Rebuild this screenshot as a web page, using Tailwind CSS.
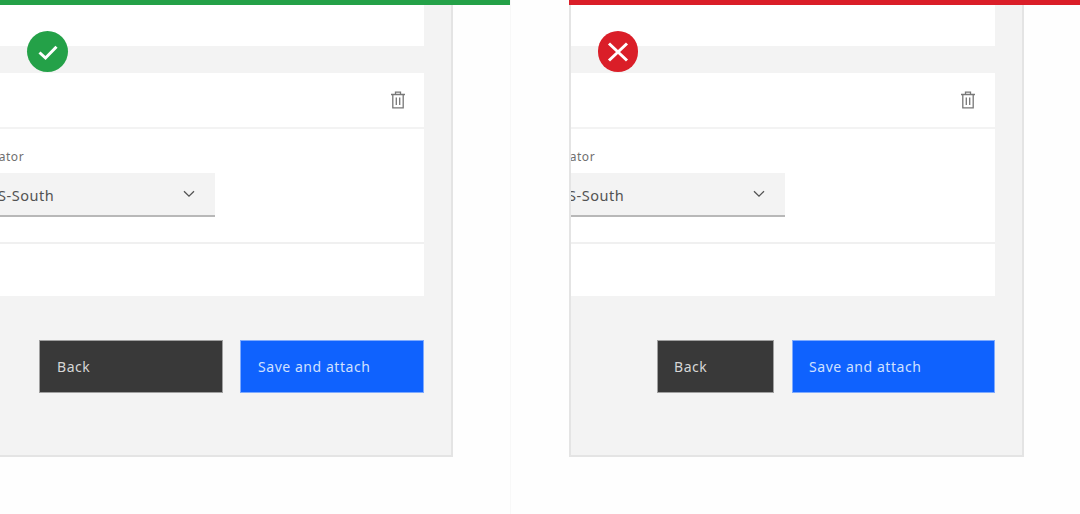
<!DOCTYPE html>
<html lang="en">

<head>
    <meta charset="UTF-8" />
    <title>Attach resource - do and don't</title>
    <script src="https://cdn.jsdelivr.net/npm/@tailwindcss/browser@4"></script>
</head>

<body class="bg-[#fefefe] font-['Noto_Sans',sans-serif] text-[#525252]">
    <div class="flex w-[1080px] h-[514px] overflow-hidden">

        <!-- Do -->
        <div class="w-[511px] shrink-0 border-r border-[#f8f8f8] overflow-hidden">
            <div class="h-[5px] bg-[#24a148]"></div>
            <div class="relative -ml-[2px] w-[455px] h-[452px] bg-[#f3f3f3] border-r-2 border-b-2 border-[#e4e4e4] pr-[27px]">
                <div class="h-[41px] bg-white"></div>
                <div class="mt-[27px] bg-white overflow-hidden">
                    <div class="h-[56px] border-b-2 border-[#f3f3f3] flex items-center justify-end pr-[18px]">
                        <svg class="w-[16px] h-[18px] text-[#777777]" viewBox="0 0 16 18" fill="none" stroke="currentColor" stroke-width="1.3">
                            <path d="M1 3.5h14M5.5 3.5V1.2h5v2.3M2.8 3.5V16.8h10.4V3.5M6.3 6.5v7.5M9.7 6.5v7.5" />
                        </svg>
                    </div>
                    <div class="h-[115px] border-b-2 border-[#f0f0f0] pt-[21px]">
                        <p class="-ml-[20px] text-[12px] leading-[14px] tracking-[0.5px] text-[#6f6f6f] whitespace-nowrap">Locator</p>
                        <div class="mt-[9px] w-[217px] h-[44px] bg-[#f3f3f3] border-b-2 border-[#b8b8b8] flex items-center justify-between pr-[20px] pt-[4px]">
                            <span class="-ml-[11px] text-[14.5px] tracking-[0.5px] text-[#525252] whitespace-nowrap">US-South</span>
                            <svg class="w-[12px] h-[8px] text-[#525252] -mt-[5px]" viewBox="0 0 12 8" fill="none" stroke="currentColor" stroke-width="1.3">
                                <path d="M1 1.2l5 5 5-5" />
                            </svg>
                        </div>
                    </div>
                    <div class="h-[52px]"></div>
                </div>
                <div class="mt-[44px] flex gap-[17px] pl-[41px]">
                    <button class="w-[184px] h-[53px] bg-[#393939] border border-[#a0a0a0] text-left pl-[17px] text-[14px] tracking-[0.55px] text-[#d6d6d6]">Back</button>
                    <button class="w-[184px] h-[53px] bg-[#0f62fe] border border-[#7eaafe] text-left pl-[17px] text-[14px] tracking-[0.55px] text-[#d0e0ff]">Save and attach</button>
                </div>
                <div class="absolute left-[29px] top-[26px] w-[41px] h-[41px] rounded-full bg-[#24a148] flex items-center justify-center">
                    <svg class="w-[22px] h-[22px]" viewBox="0 0 22 22" fill="none" stroke="white" stroke-width="3">
                        <path d="M2.5 11.5l6 5.5L19.5 5.8" />
                    </svg>
                </div>
            </div>
        </div>

        <!-- Don't -->
        <div class="ml-[58px] flex-1 overflow-hidden">
            <div class="h-[5px] bg-[#da1e28]"></div>
            <div class="relative w-[455px] h-[452px] bg-[#f3f3f3] border-l-2 border-r-2 border-b-2 border-[#e4e4e4] pr-[27px]">
                <div class="h-[41px] bg-white"></div>
                <div class="mt-[27px] bg-white overflow-hidden">
                    <div class="h-[56px] border-b-2 border-[#f3f3f3] flex items-center justify-end pr-[19px]">
                        <svg class="w-[16px] h-[18px] text-[#777777]" viewBox="0 0 16 18" fill="none" stroke="currentColor" stroke-width="1.3">
                            <path d="M1 3.5h14M5.5 3.5V1.2h5v2.3M2.8 3.5V16.8h10.4V3.5M6.3 6.5v7.5M9.7 6.5v7.5" />
                        </svg>
                    </div>
                    <div class="h-[115px] border-b-2 border-[#f0f0f0] pt-[21px]">
                        <p class="-ml-[22px] text-[12px] leading-[14px] tracking-[0.5px] text-[#6f6f6f] whitespace-nowrap">Locator</p>
                        <div class="mt-[9px] w-[214px] h-[44px] bg-[#f3f3f3] border-b-2 border-[#b8b8b8] flex items-center justify-between pr-[20px] pt-[4px]">
                            <span class="-ml-[14px] text-[14.5px] tracking-[0.5px] text-[#525252] whitespace-nowrap">US-South</span>
                            <svg class="w-[12px] h-[8px] text-[#525252] -mt-[5px]" viewBox="0 0 12 8" fill="none" stroke="currentColor" stroke-width="1.3">
                                <path d="M1 1.2l5 5 5-5" />
                            </svg>
                        </div>
                    </div>
                    <div class="h-[52px]"></div>
                </div>
                <div class="mt-[44px] flex justify-end gap-[18px]">
                    <button class="w-[117px] h-[53px] bg-[#393939] border border-[#a0a0a0] text-left pl-[16px] text-[14px] tracking-[0.55px] text-[#d6d6d6]">Back</button>
                    <button class="w-[203px] h-[53px] bg-[#0f62fe] border border-[#7eaafe] text-left pl-[16px] text-[14px] tracking-[0.55px] text-[#d0e0ff]">Save and attach</button>
                </div>
                <div class="absolute left-[27px] top-[26px] w-[40px] h-[41px] rounded-full bg-[#da1e28] flex items-center justify-center">
                    <svg class="w-[22px] h-[22px]" viewBox="0 0 22 22" fill="none" stroke="white" stroke-width="3">
                        <path d="M2 2.5l18 17M20 2.5l-18 17" />
                    </svg>
                </div>
            </div>
        </div>

    </div>
</body>

</html>
